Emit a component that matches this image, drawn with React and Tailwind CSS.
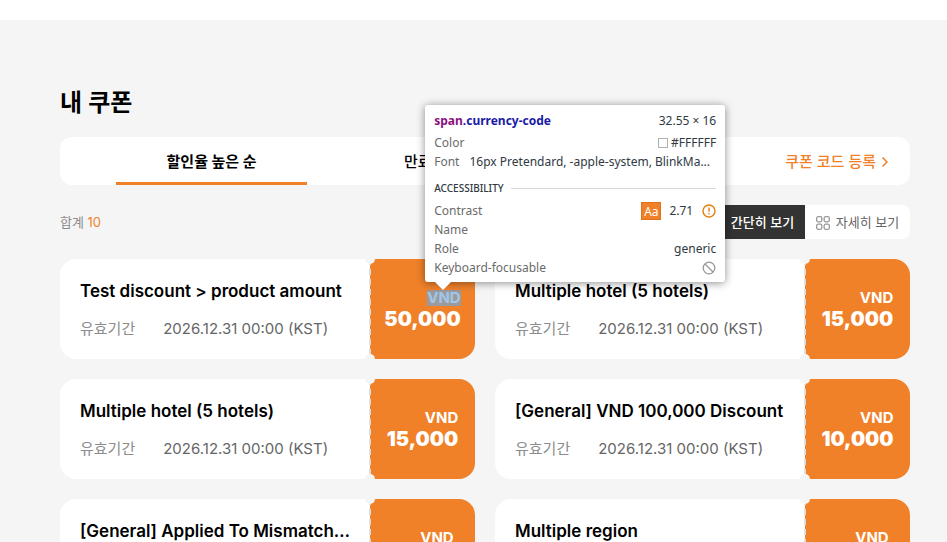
import React from "react";

const coupons = [
  { title: "Test discount > product amount", amount: "50,000", inspected: true },
  { title: "Multiple hotel (5 hotels)", amount: "15,000" },
  { title: "Multiple hotel (5 hotels)", amount: "15,000" },
  { title: "[General] VND 100,000 Discount", amount: "10,000" },
  { title: "[General] Applied To Mismatched Region", amount: "5,000" },
  { title: "Multiple region", amount: "5,000" },
];

function ListIcon() {
  return (
    <svg width="14" height="14" viewBox="0 0 14 14" fill="none" stroke="currentColor" aria-hidden="true">
      <rect x="0.5" y="0.5" width="13" height="13" rx="1" />
      <path d="M0.5 7h13" />
    </svg>
  );
}

function GridIcon() {
  return (
    <svg width="14" height="14" viewBox="0 0 14 14" fill="none" stroke="#999999" strokeWidth="1.3" aria-hidden="true">
      <rect x="0.65" y="0.65" width="5.2" height="5.2" rx="1.5" />
      <rect x="8.15" y="0.65" width="5.2" height="5.2" rx="1.5" />
      <rect x="0.65" y="8.15" width="5.2" height="5.2" rx="1.5" />
      <rect x="8.15" y="8.15" width="5.2" height="5.2" rx="1.5" />
    </svg>
  );
}

function Inspector() {
  return (
    <aside className="absolute bottom-full left-0 z-10 mb-2 w-[300px] -ml-0.5 rounded-[3px] bg-white px-[9px] pt-[6px] pb-[5px] text-left font-['Noto_Sans','Open_Sans',sans-serif] text-[12px] leading-[19px] font-normal text-[#303942] shadow-[0_1px_8px_rgba(0,0,0,0.45)]">
      <div className="mb-[3px] flex justify-between">
        <span className="font-bold text-[#1a1aa6]">
          <span className="text-[#881280]">span</span>.currency-code
        </span>
        <span>32.55 × 16</span>
      </div>
      <div className="flex items-center justify-between">
        <span className="text-[#6b6b6b]">Color</span>
        <span className="flex items-center gap-[3px]">
          <span className="size-[10px] border border-[#b0b0b0] bg-white" />
          #FFFFFF
        </span>
      </div>
      <div className="flex gap-[10px]">
        <span className="text-[#6b6b6b]">Font</span>
        <span className="flex-1 whitespace-nowrap">16px Pretendard, -apple-system, BlinkMa...</span>
      </div>
      <div className="mt-[7px] mb-[3px] flex items-center gap-[7px] text-[10px] leading-[20px] font-medium text-[#303942]">
        <span>ACCESSIBILITY</span>
        <span className="h-px flex-1 bg-[#d8d8d8]" />
      </div>
      <div className="flex items-center text-[#6b6b6b]">
        <span className="flex-1">Contrast</span>
        <span className="mr-2 h-[18px] w-5 border border-[#d9731f] bg-[#f08129] text-center leading-[17px] text-white">Aa</span>
        <span className="mr-[9px] text-[#303942]">2.71</span>
        <svg width="14" height="14" viewBox="0 0 14 14" fill="none" stroke="#e37f0c" strokeWidth="1.4" aria-hidden="true">
          <circle cx="7" cy="7" r="6" />
          <path d="M7 3.5v4.2M7 9v1.5" />
        </svg>
      </div>
      <div className="text-[#6b6b6b]">Name</div>
      <div className="flex justify-between">
        <span className="text-[#6b6b6b]">Role</span>
        <span>generic</span>
      </div>
      <div className="flex items-center justify-between text-[#6b6b6b]">
        <span>Keyboard-focusable</span>
        <svg width="14" height="14" viewBox="0 0 14 14" fill="none" stroke="#999999" strokeWidth="1.3" aria-hidden="true">
          <circle cx="7" cy="7" r="5.8" />
          <path d="M3 3l8 8" />
        </svg>
      </div>
      <svg className="absolute top-full left-[10px]" width="16" height="8" viewBox="0 0 16 8" aria-hidden="true">
        <path d="M0 0h16L8 8z" fill="#ffffff" />
      </svg>
    </aside>
  );
}

function Coupon({ title, amount, inspected }) {
  return (
    <li className="flex h-[100px]">
      <div className="flex min-w-0 flex-1 flex-col gap-[17px] rounded-l-2xl bg-white pt-5 pr-3 pl-5">
        <h2 className="truncate text-[17px] leading-6 font-semibold text-black">{title}</h2>
        <p className="flex gap-7 text-[15px] leading-[18px]">
          <span className="text-[#8c8c8c]">유효기간</span>
          <span className="text-[#666666]">2026.12.31 00:00 (KST)</span>
        </p>
      </div>
      <div className="relative flex w-[105px] items-center justify-center rounded-r-2xl bg-[#f08129] pt-1 text-white">
        <span className="absolute inset-y-0 -left-px w-0.5 bg-[repeating-linear-gradient(#dddddd_0_6px,transparent_6px_10px)]" />
        <span className="absolute -top-[5px] -left-[5px] size-[10px] rounded-full bg-[#f5f5f5]" />
        <span className="absolute -bottom-[5px] -left-[5px] size-[10px] rounded-full bg-[#f5f5f5]" />
        <div className="flex flex-col items-end font-bold">
          <div className="relative text-[15px] leading-4">
            VND
            {inspected && (
              <>
                <span className="absolute inset-0 bg-[#6fa8dc]/66" />
                <Inspector />
              </>
            )}
          </div>
          <strong className="text-[20px] leading-[26px]">{amount}</strong>
        </div>
      </div>
    </li>
  );
}

export default function App() {
  return (
    <div className="min-h-screen border-t-[20px] border-white bg-[#f5f5f5] font-['Inter','Noto_Sans_CJK_KR',sans-serif] text-black">
      <main className="pt-[65px] pr-[37px] pb-10 pl-[60px]">
        <h1 className="text-[24px] leading-9 font-semibold">내 쿠폰</h1>
        <nav className="mt-4 flex h-12 items-stretch rounded-xl bg-white pr-5 pl-14">
          <button className="w-[191px] border-b-[3px] border-[#f08129] pt-[5px] text-[15px] font-bold">할인율 높은 순</button>
          <button className="ml-10 w-[191px] pt-0.5 text-[15px] font-medium">만료 임박 순</button>
          <a href="#register" className="ml-auto flex items-center gap-1 pt-0.5 text-[15px] font-medium text-[#f08129]">
            쿠폰 코드 등록
            <svg width="10" height="12" viewBox="0 0 10 12" fill="none" stroke="currentColor" strokeWidth="1.5" aria-hidden="true">
              <path d="M2.5 1.5L7 6l-4.5 4.5" />
            </svg>
          </a>
        </nav>
        <div className="mt-5 flex items-center justify-between text-[13px]">
          <p className="pt-0.5 text-[#8c8c8c]">
            합계 <span className="text-[#f08129]">10</span>
          </p>
          <div className="flex h-[34px] overflow-hidden rounded-lg">
            <button className="flex w-[105px] items-center justify-center gap-[6px] bg-[#333333] pt-0.5 font-medium text-white">
              <ListIcon />
              간단히 보기
            </button>
            <button className="flex w-[105px] items-center justify-center gap-[6px] bg-white pt-0.5 text-[#666666]">
              <GridIcon />
              자세히 보기
            </button>
          </div>
        </div>
        <ul className="mt-5 grid grid-cols-2 gap-5">
          {coupons.map((coupon, i) => (
            <Coupon key={i} {...coupon} />
          ))}
        </ul>
      </main>
    </div>
  );
}
